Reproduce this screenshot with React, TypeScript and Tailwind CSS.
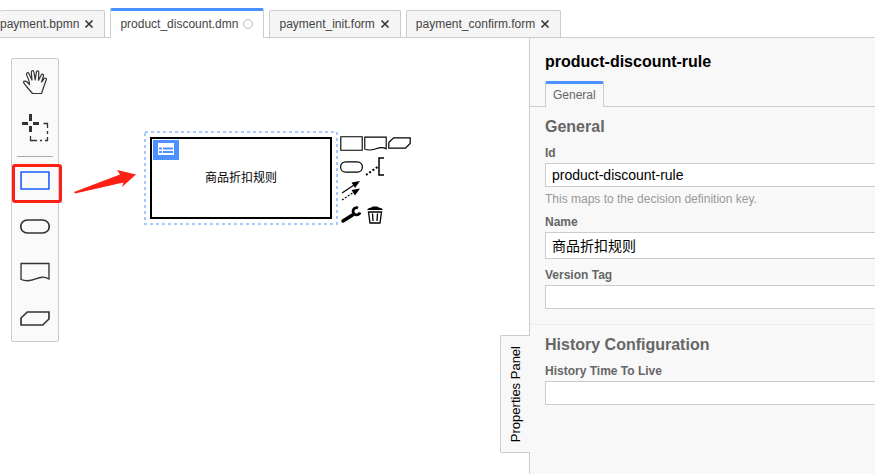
import { useState } from 'react';
import type { ReactNode } from 'react';
import clsx from 'clsx';

type FileTab = {
  name: string;
  dirty?: boolean;
};

const fileTabs: FileTab[] = [
  { name: 'payment.bpmn' },
  { name: 'product_discount.dmn', dirty: true },
  { name: 'payment_init.form' },
  { name: 'payment_confirm.form' },
];

// DRD shapes, shared by the palette and the context pad
const shapes = {
  decision: 'M1 1H28V18H1Z',
  inputData: 'M7.5 1H21.5C30.5 1 30.5 14 21.5 14H7.5C-1.5 14 -1.5 1 7.5 1Z',
  knowledgeSource: 'M1 1.5H28V17C18 11 13 22.5 1 17.5Z',
  businessKnowledge: 'M7 1H28V8L22 14H1V7Z',
};

function HandIcon() {
  return (
    <svg width="26" height="26" viewBox="0 0 26 26" fill="none" stroke="#333" strokeWidth="1.2" strokeLinejoin="round" strokeLinecap="round">
      <path d="M10.5 24.5L4.5 17.5C3.5 15.5 1.5 14.5 1.5 13C2 11.5 4 12 5 13L7.5 15.5C7.5 12 5.5 8 4.5 5.5C4.2 3.5 6.2 3 7 4.8L10 11L9.3 3.3C9.3 1.2 11.5 1 11.9 3L13.2 10.8L14.4 3C15 1.2 17 1.6 16.8 3.5L16.5 11.3L19.3 6C20.2 4.5 22 5.5 21.5 7L19.5 13C21 11.5 21.5 9.5 23 9C24.5 9 24.8 10 24 11.5C23 14 22.5 16 21.5 18.5L19.5 24.5Z" />
    </svg>
  );
}

function LassoIcon() {
  return (
    <svg width="28" height="28" viewBox="0 0 28 28" fill="none" stroke="#333">
      <path d="M9.5 0V7M9.5 12V18M1 9.5H7M12 9.5H18" strokeWidth="3" />
      <path d="M22.5 9.5H27M26.5 9V14M26.5 17V20M26.5 23V27M27 26.5H24M21 26.5H19M16 26.5H9.5V22" strokeWidth="1.3" />
    </svg>
  );
}

type ShapeIconProps = {
  d: string;
  width: number;
  height: number;
  viewBox: string;
  strokeWidth: number;
};

function ShapeIcon({ d, width, height, viewBox, strokeWidth }: ShapeIconProps) {
  return (
    <svg width={width} height={height} viewBox={viewBox} fill="none" stroke="currentColor" strokeWidth={strokeWidth} preserveAspectRatio="none">
      <path d={d} />
    </svg>
  );
}

function AnnotationIcon() {
  return (
    <svg width="22" height="22" viewBox="0 0 22 22" fill="none" stroke="#000">
      <path d="M20 2H15V19H20" strokeWidth="1.5" />
      <path d="M2 19L13.5 11" strokeWidth="2" strokeDasharray="2 2" />
    </svg>
  );
}

function ConnectIcon() {
  return (
    <svg width="22" height="22" viewBox="0 0 22 22" fill="none" stroke="#000">
      <path d="M2 13L14 5" strokeWidth="1.2" />
      <path d="M2 20L14 12" strokeWidth="1.2" strokeDasharray="2 1.5" />
      <path d="M20 1L11.5 2.5L15 8ZM20 8.5L11.5 10L15 15.5Z" fill="#000" stroke="none" />
    </svg>
  );
}

function WrenchIcon() {
  return (
    <svg width="22" height="22" viewBox="0 0 22 22" fill="none" stroke="#000">
      <path d="M3 17L12.5 11" strokeWidth="3.5" strokeLinecap="round" />
      <path d="M18 4A3.6 3.6 0 1 0 20 8.5" strokeWidth="2.8" />
    </svg>
  );
}

function TrashIcon() {
  return (
    <svg width="22" height="22" viewBox="0 0 22 22" fill="none" stroke="#000">
      <path d="M3.5 5C5 3.5 8 4 8.5 2.5H13.5C14 4 17 3.5 18.5 5V6H3.5Z" fill="#000" stroke="none" />
      <path d="M4.5 8H17.5L16 19H6ZM8.5 9.5L9 17M13.5 9.5L13 17" strokeWidth="1.3" />
    </svg>
  );
}

function TableIcon() {
  return (
    <svg width="16" height="12" viewBox="0 0 16 12" fill="none">
      <path d="M0 0H16V12H0Z" fill="#fff" />
      <path d="M1 5.5H4M5 5.5H15M1 9H4M5 9H15" stroke="#4d90ff" strokeWidth="2" />
    </svg>
  );
}

function FileTabs() {
  const [active, setActive] = useState(1);

  return (
    <nav className="flex h-[38px] items-end gap-[5px] border-b border-[#ccc] text-xs text-[#444]" aria-label="Open files">
      {fileTabs.map((tab, i) => (
        <div
          key={tab.name}
          className={clsx(
            'flex items-center gap-[5px] rounded-t-[2px] border-[#ccc] pr-[10px]',
            i === active
              ? '-mb-px h-[30px] border-x border-t-[3px] border-x-[#ccc] border-t-[#4d90ff] bg-white pb-px'
              : 'h-[27px] border-t bg-[#f5f5f5]',
            i === 0 ? 'border-r' : 'border-x pl-[9px]',
          )}
        >
          <button type="button" onClick={() => setActive(i)}>{tab.name}</button>
          {tab.dirty ? (
            <span className="size-[10px] rounded-full border border-[#bbb]" />
          ) : (
            <button type="button" aria-label={`Close ${tab.name}`}>
              <svg width="10" height="10" viewBox="0 0 10 10" stroke="#333" strokeWidth="1.6">
                <path d="M1.5 1.5L8.5 8.5M8.5 1.5L1.5 8.5" />
              </svg>
            </button>
          )}
        </div>
      ))}
    </nav>
  );
}

function PaletteEntry({ title, children, selected }: { title: string; children: ReactNode; selected?: boolean }) {
  return (
    <button
      type="button"
      aria-label={title}
      className={clsx('flex size-[46px] items-center justify-center', selected ? 'text-[#1a5cff]' : 'text-[#333]')}
    >
      {children}
    </button>
  );
}

function Palette() {
  return (
    <div className="absolute top-5 left-[11px] flex flex-col rounded-[2px] border border-[#ccc] bg-[#fafafa]">
      <PaletteEntry title="Hand tool"><HandIcon /></PaletteEntry>
      <PaletteEntry title="Lasso tool"><LassoIcon /></PaletteEntry>
      <hr className="mx-[5px] mt-[5px] border-[#aaa]" />
      <PaletteEntry title="Decision" selected>
        <ShapeIcon d={shapes.decision} width={30} height={19} viewBox="0 0 29 19" strokeWidth={1.5} />
      </PaletteEntry>
      <PaletteEntry title="Input data">
        <ShapeIcon d={shapes.inputData} width={30} height={15} viewBox="0 0 29 15" strokeWidth={1.6} />
      </PaletteEntry>
      <PaletteEntry title="Knowledge source">
        <ShapeIcon d={shapes.knowledgeSource} width={30} height={20} viewBox="0 0 29 20" strokeWidth={1.3} />
      </PaletteEntry>
      <PaletteEntry title="Business knowledge model">
        <ShapeIcon d={shapes.businessKnowledge} width={30} height={15} viewBox="0 0 29 15" strokeWidth={1.6} />
      </PaletteEntry>
    </div>
  );
}

const padEntries: { title: string; icon: ReactNode; newRow?: boolean }[] = [
  { title: 'Append decision', icon: <ShapeIcon d={shapes.decision} width={23} height={15} viewBox="0 0 29 19" strokeWidth={1.4} /> },
  { title: 'Append knowledge source', icon: <ShapeIcon d={shapes.knowledgeSource} width={23} height={15} viewBox="0 0 29 20" strokeWidth={1.4} /> },
  { title: 'Append business knowledge model', icon: <ShapeIcon d={shapes.businessKnowledge} width={23} height={12} viewBox="0 0 29 15" strokeWidth={1.5} /> },
  { title: 'Append input data', icon: <ShapeIcon d={shapes.inputData} width={23} height={12} viewBox="0 0 29 15" strokeWidth={1.5} /> },
  { title: 'Add text annotation', icon: <AnnotationIcon /> },
  { title: 'Connect', icon: <ConnectIcon />, newRow: true },
  { title: 'Change type', icon: <WrenchIcon />, newRow: true },
  { title: 'Remove', icon: <TrashIcon /> },
];

function ContextPad() {
  return (
    <div className="absolute top-[93px] left-[339px] grid grid-cols-[24px_24px_24px] text-black">
      {padEntries.map((entry) => (
        <button
          key={entry.title}
          type="button"
          aria-label={entry.title}
          className={clsx('flex size-6 items-center justify-center', entry.newRow && 'col-start-1')}
        >
          {entry.icon}
        </button>
      ))}
    </div>
  );
}

function Canvas() {
  return (
    <main className="relative min-w-0 flex-1 overflow-hidden bg-white">
      <Palette />

      {/* highlight and pointer */}
      <div className="absolute top-[126px] left-3 h-[39px] w-[50px] rounded-[3px] border-3 border-[#ff2015]" />
      <svg className="absolute top-[130px] left-[72px]" width="66" height="28" viewBox="0 0 66 28">
        <path d="M2 24L48 6.5L45 2L64 6.5L50 19L51.5 14.5L3 25.5Z" fill="#ff2015" />
      </svg>

      {/* decision node with its selection outline */}
      <svg className="absolute top-[93px] left-[144px]" width="195" height="94" viewBox="0 0 195 94" fill="none">
        <rect x="1" y="1" width="192" height="92" stroke="#4d90ff" strokeOpacity="0.5" strokeWidth="2" strokeDasharray="3 3" />
      </svg>
      <div className="absolute top-[99px] left-[150px] flex h-[82px] w-[182px] items-center justify-center border-2 border-black bg-white text-xs text-black">
        <button type="button" aria-label="Open decision table" className="absolute top-px left-px flex h-5 w-[26px] items-start justify-center bg-[#4d90ff] pt-[3px]">
          <TableIcon />
        </button>
        商品折扣规则
      </div>
      <ContextPad />
    </main>
  );
}

function Field({ id, label, value, hint }: { id: string; label: string; value?: string; hint?: string }) {
  return (
    <div>
      <label htmlFor={id} className="block pb-[3px] text-xs leading-[14px] font-bold text-[#666]">{label}</label>
      <input
        id={id}
        type="text"
        defaultValue={value}
        className={clsx(
          'block w-full border border-r-0 border-[#ccc] bg-white px-[6px] text-sm text-black outline-none',
          id === 'name' ? 'h-[27px] pb-[2px]' : 'h-6',
        )}
      />
      {hint && <p className="pt-[5px] text-xs leading-[14px] text-[#999]">{hint}</p>}
    </div>
  );
}

function PropertiesPanel() {
  return (
    <aside className="relative w-[346px] shrink-0 border-l border-[#ccc] bg-[#f8f8f8]">
      <button
        type="button"
        className="absolute top-[297px] -left-[30px] flex h-[118px] w-[30px] items-center justify-center rounded-l-[2px] border border-r-0 border-[#ccc] bg-[#f8f8f8] text-[13px] text-black"
      >
        <span className="rotate-180 whitespace-nowrap [writing-mode:vertical-rl]">Properties Panel</span>
      </button>

      <h1 className="px-[15px] pt-[14px] text-base leading-5 font-bold text-black">product-discount-rule</h1>
      <div className="mt-[9px] flex border-b border-[#ccc] pl-[15px]">
        <a href="#general" className="-mb-px flex h-[26px] items-center rounded-t-[2px] border-x border-t-[3px] border-x-[#ccc] border-t-[#4d90ff] bg-[#f8f8f8] px-[7px] pb-[2px] text-xs text-[#666]">
          General
        </a>
      </div>

      <section id="general" className="border-b border-[#eee] pb-[15px] pl-[15px]">
        <h2 className="pt-[10px] pb-[9px] text-base leading-5 font-bold text-[#666]">General</h2>
        <div className="flex flex-col gap-[9px]">
          <Field id="id" label="Id" value="product-discount-rule" hint="This maps to the decision definition key." />
          <Field id="name" label="Name" value="商品折扣规则" />
          <Field id="version-tag" label="Version Tag" />
        </div>
      </section>

      <section className="pl-[15px]">
        <h2 className="pt-[10px] pb-[9px] text-base leading-5 font-bold text-[#666]">History Configuration</h2>
        <Field id="history-ttl" label="History Time To Live" />
      </section>
    </aside>
  );
}

export default function App() {
  return (
    <div className="flex min-h-screen flex-col bg-white font-['Liberation_Sans','Noto_Sans_CJK_SC',sans-serif]">
      <FileTabs />
      <div className="flex flex-1">
        <Canvas />
        <PropertiesPanel />
      </div>
    </div>
  );
}
